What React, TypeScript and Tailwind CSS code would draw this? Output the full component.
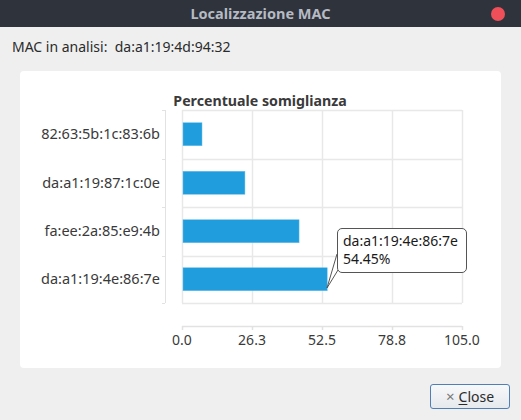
import React from "react";

const rows = [
  { label: "82:63:5b:1c:83:6b", v: 7.5 },
  { label: "da:a1:19:87:1c:0e", v: 23.6 },
  { label: "fa:ee:2a:85:e9:4b", v: 43.9 },
  { label: "da:a1:19:4e:86:7e", v: 54.45 },
];
const ticks = ["0.0", "26.3", "52.5", "78.8", "105.0"];
const gx = [162, 232, 302, 372, 442];
const gy = [39, 87.5, 136, 184.5, 232];

export default function App() {
  return (
    <div
      className="w-[521px] h-[420px] bg-[#efefef] flex flex-col overflow-hidden"
      style={{ fontFamily: '"Noto Sans", "DejaVu Sans", sans-serif' }}
    >
      <div className="h-[27px] bg-[#2f333c] relative flex items-center justify-center shrink-0">
        <span className="text-[14.5px] font-bold text-[#b5bac3]">Localizzazione MAC</span>
        <span className="absolute left-[491px] top-[7px] w-[14px] h-[14px] rounded-full bg-[#ef4f58]" />
      </div>
      <div className="px-[12px] pt-[9px] h-[44px] text-[14px] text-[#2b2b2b]">
        MAC in analisi:&nbsp; da:a1:19:4d:94:32
      </div>
      <div className="mx-[20px] h-[297px] bg-white rounded-[4px] relative shrink-0">
        <svg width="480" height="297" className="block">
          <text
            x="240"
            y="35"
            textAnchor="middle"
            fontSize="14.2"
            fontWeight="700"
            fill="#3a3a3a"
            fontFamily='"Noto Sans", sans-serif'
          >
            Percentuale somiglianza
          </text>
          <line x1="145.5" y1="39" x2="145.5" y2="232" stroke="#e2e2e2" strokeWidth="1" />
          {gy.map((y) => (
            <line key={"t" + y} x1="142" y1={Math.round(y) + 0.5} x2="145" y2={Math.round(y) + 0.5} stroke="#e2e2e2" />
          ))}
          {gy.map((y) => (
            <line key={"h" + y} x1="162" y1={Math.round(y) + 0.5} x2="442" y2={Math.round(y) + 0.5} stroke="#e8e8e8" strokeWidth="1.5" />
          ))}
          {gx.map((x) => (
            <line key={"v" + x} x1={x + 0.5} y1="39" x2={x + 0.5} y2="232" stroke="#e8e8e8" strokeWidth="1.5" />
          ))}
          {rows.map((r, i) => {
            const cy = (gy[i] + gy[i + 1]) / 2;
            const w = (r.v / 105) * 280;
            return (
              <g key={r.label}>
                <rect x="163" y={cy - 11.5} width={w - 1} height="23" fill="#1f9ddd" stroke="#6cc0ea" strokeWidth="0.5" />
                <text
                  x="140"
                  y={cy + 5}
                  textAnchor="end"
                  fontSize="14.5"
                  fill="#3a3a3a"
                  fontFamily='"Noto Sans", sans-serif'
                >
                  {r.label}
                </text>
              </g>
            );
          })}
          <line x1="162" y1="255.5" x2="442" y2="255.5" stroke="#e2e2e2" strokeWidth="1.5" />
          {gx.map((x, i) => (
            <g key={"x" + x}>
              <line x1={x + 0.5} y1="255" x2={x + 0.5} y2="259" stroke="#e2e2e2" strokeWidth="1.5" />
              <text
                x={x}
                y="274"
                textAnchor="middle"
                fontSize="14"
                fill="#3a3a3a"
                fontFamily='"Noto Sans", sans-serif'
              >
                {ticks[i]}
              </text>
            </g>
          ))}
          <path d="M317 183 L307 217 L318 199" fill="white" stroke="#555" strokeWidth="1" />
        </svg>
        <div className="absolute left-[317px] top-[157px] w-[130px] h-[45px] border border-[#555] rounded-[5px] bg-white px-[5px] pt-[3px] text-[14px] leading-[18px] text-[#1a1a1a]">
          <div>da:a1:19:4e:86:7e</div>
          <div>54.45%</div>
        </div>
      </div>
      <div className="flex justify-end pr-[11px] pt-[16px]">
        <button className="w-[80px] h-[25px] border border-[#4f7fb3] rounded-[3px] bg-gradient-to-b from-[#f7f8fa] to-[#e6e9ed] flex items-center justify-center gap-[4px] text-[14px] text-[#2b2b2b]">
          <span className="text-[#777] text-[15px] leading-none">×</span>
          <span>
            <span className="underline underline-offset-2">C</span>lose
          </span>
        </button>
      </div>
    </div>
  );
}
